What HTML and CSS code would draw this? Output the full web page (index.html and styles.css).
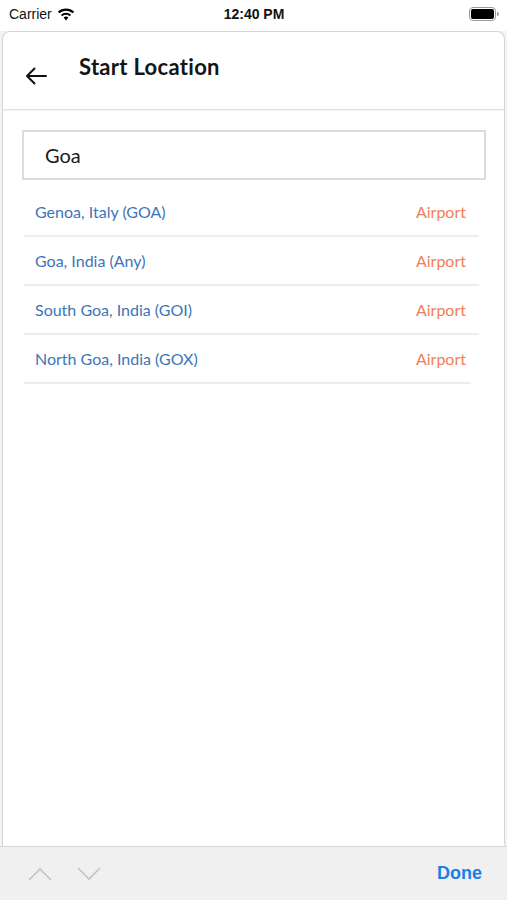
FILE: index.html
```html
<!DOCTYPE html>
<html>
  <head>
    <meta charset="UTF-8">
    <title>Start Location</title>
    <link rel="stylesheet" href="styles.css">
  </head>
  <body>
    <div class="status">
      <div class="st-left">Carrier
        <svg class="wifi" width="18" height="13" viewBox="0 0 18 13">
          <path d="M9 12.5 L6.6 9.6 A3.6 3.6 0 0 1 11.4 9.6 Z" fill="#000"/>
          <path d="M4.6 7.5 A6.4 6.4 0 0 1 13.4 7.5" stroke="#000" stroke-width="2.1" fill="none"/>
          <path d="M1.6 4.6 A10.6 10.6 0 0 1 16.4 4.6" stroke="#000" stroke-width="2.1" fill="none"/>
        </svg>
      </div>
      <div class="st-time">12:40 PM</div>
      <div class="st-right">
        <svg width="30" height="14" viewBox="0 0 30 14">
          <rect x="0.5" y="0.5" width="26" height="13" rx="3.5" fill="none" stroke="#9a9a9a"/>
          <rect x="2" y="2" width="23" height="10" rx="2" fill="#000"/>
          <path d="M28 5 v4 a2 2 0 0 0 0 -4z" fill="#9a9a9a"/>
        </svg>
      </div>
    </div>

    <div class="card">
      <div class="header">
        <svg class="back" width="22" height="18" viewBox="0 0 22 18">
          <path d="M21 9 H2 M9.5 1.5 L2 9 L9.5 16.5" stroke="#111" stroke-width="2" fill="none" stroke-linecap="round" stroke-linejoin="round"/>
        </svg>
        <h1 class="title">Start Location</h1>
      </div>

      <div class="body">
        <div class="search">Goa</div>
        <ul class="results">
          <li class="row"><span class="place">Genoa, Italy (GOA)</span><span class="kind">Airport</span></li>
          <li class="row"><span class="place">Goa, India (Any)</span><span class="kind">Airport</span></li>
          <li class="row"><span class="place">South Goa, India (GOI)</span><span class="kind">Airport</span></li>
          <li class="row last"><span class="place">North Goa, India (GOX)</span><span class="kind">Airport</span></li>
        </ul>
      </div>
    </div>

    <div class="toolbar">
      <div class="arrows">
        <svg width="24" height="14" viewBox="0 0 24 14"><path d="M1 13 L12 2 L23 13" stroke="#c4c4c4" stroke-width="1.6" fill="none"/></svg>
        <svg width="24" height="14" viewBox="0 0 24 14"><path d="M1 1 L12 12 L23 1" stroke="#c4c4c4" stroke-width="1.6" fill="none"/></svg>
      </div>
      <div class="done">Done</div>
    </div>
  </body>
</html>
```

FILE: styles.css
```css
* { box-sizing: border-box; }

html, body {
  margin: 0;
  height: 900px;
}

body {
  width: 507px;
  background-color: #f4f4f4;
  font-family: "Lato", "Open Sans", sans-serif;
  display: flex;
  flex-direction: column;
  overflow: hidden;
}

.status {
  height: 31px;
  background-color: #fff;
  display: flex;
  align-items: center;
  justify-content: space-between;
  padding: 0 8px 3px 9px;
  font-family: "Liberation Sans", Arial, sans-serif;
  font-size: 14px;
  color: #111;
}
.st-left { display: flex; align-items: center; gap: 5px; width: 100px; }
.st-time { font-weight: bold; }
.st-right { width: 100px; display: flex; justify-content: flex-end; }

.card {
  flex: 1;
  margin: 0 2px;
  background-color: #fff;
  border: 1px solid #d6d6d6;
  border-bottom: none;
  border-radius: 8px 8px 0 0;
}

.header {
  height: 78px;
  border-bottom: 1px solid #e3e3e3;
  display: flex;
  align-items: center;
  padding-left: 22px;
  box-shadow: 0 1px 0 #f3f3f3;
}
.back { margin-top: 10px; }
.title {
  margin: 0 0 8px 32px;
  font-size: 22px;
  font-weight: bold;
  letter-spacing: 0.3px;
  color: #151515;
}

.body { padding: 20px 18px 0 19px; }

.search {
  height: 50px;
  border: 2px solid #dcdcdc;
  padding-left: 21px;
  display: flex;
  align-items: center;
  font-size: 20px;
  color: #1a1a1a;
}

.results {
  list-style: none;
  margin: 8px 0 0 0;
  padding: 0;
}
.row {
  height: 49px;
  margin-left: 2px;
  margin-right: 7px;
  display: flex;
  align-items: center;
  justify-content: space-between;
  padding: 0 13px 0 11px;
  border-bottom: 2px solid #ededed;
  font-size: 16px;
}
.row.last { margin-right: 15px; padding-right: 5px; }
.place { color: #3d75b8; }
.kind { color: #f17e58; }

.toolbar {
  height: 54px;
  flex-shrink: 0;
  background-color: #f0f0f0;
  border-top: 1px solid #d8d8d8;
  display: flex;
  align-items: center;
  justify-content: space-between;
  padding: 0 25px 0 28px;
}
.arrows { display: flex; gap: 25px; margin-top: 1px; }
.done {
  font-family: "Liberation Sans", Arial, sans-serif;
  font-size: 18px;
  font-weight: bold;
  color: #1a7fe4;
}
```
